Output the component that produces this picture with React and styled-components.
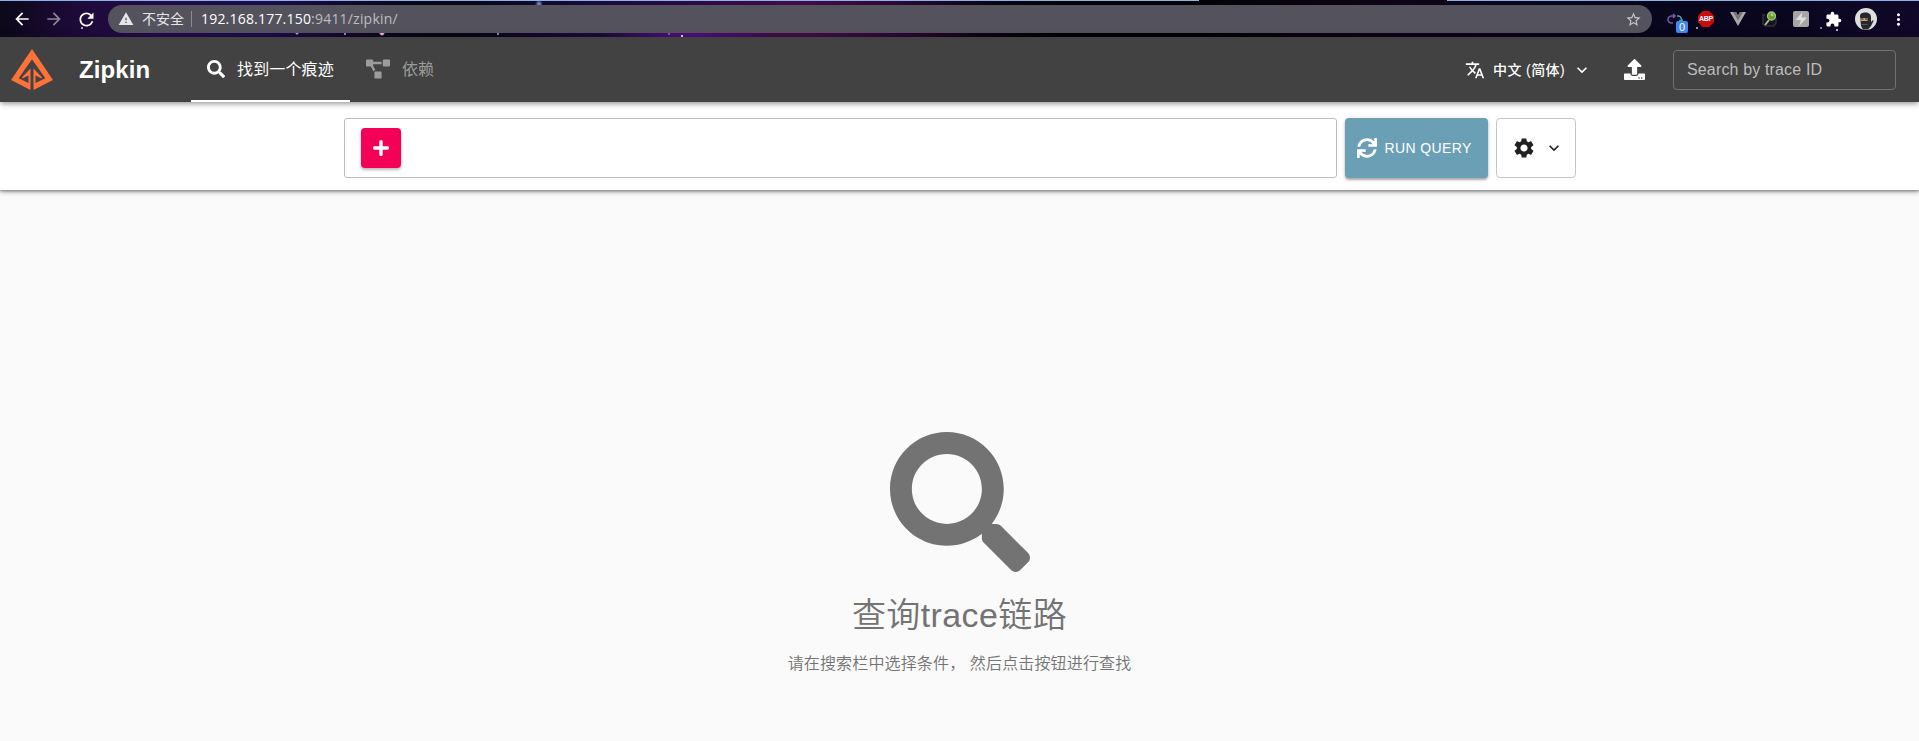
import React from "react";
import styled, { createGlobalStyle } from "styled-components";
import { FaSearch, FaProjectDiagram, FaUpload, FaSync, FaPlus } from "react-icons/fa";
import {
  MdTranslate, MdExpandMore, MdSettings, MdArrowBack, MdArrowForward,
  MdRefresh, MdWarning, MdStarBorder, MdExtension, MdMoreVert,
} from "react-icons/md";

const sans = `"Liberation Sans", "Noto Sans CJK SC", sans-serif`;

const GlobalStyle = createGlobalStyle`
  *, *::before, *::after { box-sizing: border-box; }
  body { margin: 0; background: #fafafa; font-family: ${sans}; overflow: hidden; }
  button, input { font: inherit; }
  button { padding: 0; border: 0; background: none; color: inherit; }
  svg { display: block; flex: none; }
`;

const Page = styled.div`
  display: flex;
  flex-direction: column;
  height: 741px;
`;

/* Browser toolbar */
const BrowserBar = styled.div`
  flex: none;
  height: 37px;
  display: flex;
  align-items: center;
  padding: 1px 0 0;
  color: #fff;
  background:
    linear-gradient(90deg, #8ab4e8 0 1199px, transparent 1199px 1447px, #8ab4e8 1447px) 0 0 / 100% 1px no-repeat,
    radial-gradient(circle at 297px 33px, #b9a3d0 0 1px, transparent 2px),
    radial-gradient(circle at 345px 34px, #8c84b0 0 1px, transparent 1.5px),
    radial-gradient(circle at 382px 33px, #f0b6d6 0 1.5px, transparent 3px),
    radial-gradient(circle at 82px 28px, #b7a0cb 0 .7px, transparent 1.5px),
    radial-gradient(circle at 539px 4px, #6688b4 0 1px, transparent 4px),
    radial-gradient(circle at 498px 34px, #8d84a0 0 1px, transparent 1.5px),
    radial-gradient(circle at 669px 34px, #7d5aa8 0 1px, transparent 1.5px),
    radial-gradient(circle at 682px 36px, #e2c8f4 0 1px, transparent 1.5px),
    radial-gradient(circle at 1697px 28px, #8f8ba0 0 .7px, transparent 1.5px),
    radial-gradient(circle at 1821px 28px, #5d93a5 0 .7px, transparent 1.5px),
    radial-gradient(circle at 1837px 30px, #c2a1d8 0 .7px, transparent 1.5px),
    radial-gradient(ellipse 90px 20px at 690px 36px, rgba(84, 16, 134, .9), transparent),
    linear-gradient(90deg, #0b0819 0, #1d0a38 75px, #240b4a 160px, #1c0c4a 270px, #0c0718 400px,
      #0a0616 470px, #170a38 580px, #2c0a42 690px, #450b48 800px, #2c0834 900px, #0c0512 985px, #030305 1060px,
      #030305 1200px, #0f0418 1400px, #08061a 1650px, #0b0620 1800px, #110729 1919px);
`;

const NavIcons = styled.div`
  flex: none;
  display: flex;
  align-items: center;
  gap: 12px;
  width: 108px;
  padding-left: 12px;
`;

const Dimmed = styled.span`
  opacity: .5;
`;

const AddressBar = styled.div`
  flex: none;
  display: flex;
  align-items: center;
  width: 1544px;
  height: 28px;
  padding: 0 10px 0 10px;
  border-radius: 14px;
  background: #54535d;
  font: 14px/28px "Open Sans", "Noto Sans CJK SC", sans-serif;
`;

const Security = styled.span`
  margin-left: 8px;
  color: #e6e6e9;
`;

const Divider = styled.span`
  width: 1px;
  height: 16px;
  margin: 0 9px 0 7px;
  background: #8b8a92;
`;

const Url = styled.span`
  flex: 1;
  color: #bdbdc2;
  letter-spacing: .2px;
`;

const Host = styled.span`
  color: #fff;
`;

const Extensions = styled.div`
  flex: none;
  display: flex;
  align-items: center;
  padding-left: 15px;
`;

const Slot = styled.span`
  flex: none;
  position: relative;
  display: flex;
  justify-content: center;
  width: ${(p) => p.$w || 32}px;
`;

const CountBadge = styled.span`
  position: absolute;
  left: 9px;
  top: 10px;
  width: 12px;
  height: 12px;
  border-radius: 2px;
  background: #4285f4;
  font: 11px/12px "Liberation Sans", sans-serif;
  text-align: center;
`;

const AdBlock = styled.span`
  width: 16px;
  height: 16px;
  background: #c70d0d;
  clip-path: polygon(30% 0, 70% 0, 100% 30%, 100% 70%, 70% 100%, 30% 100%, 0 70%, 0 30%);
  font: bold 7px/16px "Liberation Sans", sans-serif;
  letter-spacing: -.2px;
  text-align: center;
`;

/* Application header */
const Header = styled.header`
  position: relative;
  z-index: 2;
  flex: none;
  display: flex;
  align-items: center;
  height: 65px;
  padding: 0 23px 0 11px;
  background: #424242;
  color: #fff;
  box-shadow: 0 3px 4px -1px rgba(0, 0, 0, .25), 0 1px 8px rgba(0, 0, 0, .2);
`;

const Brand = styled.h1`
  width: 112px;
  margin: 0 0 0 26px;
  font-size: 24px;
  line-height: 32px;
  font-weight: 700;
  letter-spacing: .1px;
`;

const Tab = styled.a`
  display: flex;
  align-items: center;
  gap: 12px;
  height: 65px;
  padding: 0 16px 3px;
  font-size: 16px;
  letter-spacing: .15px;
  color: ${(p) => (p.$active ? "#fff" : "#9c9c9c")};
  border-bottom: 2px solid ${(p) => (p.$active ? "#fff" : "transparent")};
  border-top: 2px solid transparent;

  svg { margin-top: 2px; }
`;

const Spacer = styled.div`
  flex: 1;
`;

const Language = styled.button`
  display: flex;
  align-items: center;
  font-size: 14px;
  font-weight: 500;
  letter-spacing: .4px;
`;

const LanguageName = styled.span`
  margin: 0 7px 0 8px;
  padding-bottom: 1px;
`;

const Upload = styled.button`
  margin: 0 28px 0 32px;
`;

const TraceInput = styled.input`
  width: 223px;
  height: 40px;
  padding: 0 13px;
  border: 1px solid #717171;
  border-radius: 4px;
  background: transparent;
  font-size: 16px;
  letter-spacing: .15px;
  color: #fff;
  &::placeholder { color: #bcbcbc; opacity: 1; }
`;

/* Query panel */
const QueryPanel = styled.section`
  position: relative;
  z-index: 1;
  flex: none;
  display: flex;
  justify-content: center;
  gap: 8px;
  height: 88px;
  padding: 16px 0 0;
  background: #fff;
  box-shadow: 0 1px 3px rgba(0, 0, 0, .4), 0 2px 5px rgba(0, 0, 0, .25);
`;

const Criteria = styled.div`
  display: flex;
  align-items: center;
  width: 993px;
  height: 60px;
  padding: 0 16px;
  border: 1px solid #bdbdbd;
  border-radius: 3px;
`;

const AddButton = styled.button`
  display: flex;
  align-items: center;
  justify-content: center;
  width: 40px;
  height: 40px;
  border-radius: 4px;
  background: #f50057;
  color: #fff;
  box-shadow: 0 2px 3px rgba(0, 0, 0, .28);
`;

const RunButton = styled.button`
  display: flex;
  align-items: center;
  width: 143px;
  height: 60px;
  padding-left: 12px;
  gap: 8px;
  border-radius: 4px;
  background: #6b9fb6;
  color: #fff;
  font-size: 14px;
  letter-spacing: .4px;
  box-shadow: 0 2px 2px rgba(0, 0, 0, .25), 0 1px 4px rgba(0, 0, 0, .16);
`;

const SettingsButton = styled.button`
  display: flex;
  align-items: center;
  width: 80px;
  height: 60px;
  padding-left: 15px;
  gap: 8px;
  border: 1px solid #c4c4c4;
  border-radius: 4px;
  color: #212121;
`;

/* Empty state */
const EmptyState = styled.main`
  flex: 1;
  display: flex;
  flex-direction: column;
  align-items: center;
  padding-top: 242px;
  color: #737373;
`;

const Title = styled.h2`
  margin: 22px 0 0;
  font-size: 34px;
  line-height: 42px;
  font-weight: 350;
  letter-spacing: .4px;
`;

const Hint = styled.p`
  margin: 16px 0 0;
  font-size: 16px;
  line-height: 24px;
  font-weight: 350;
  letter-spacing: .15px;
`;

const Logo = () => (
  <svg width="42" height="41" viewBox="0 0 42 41">
    <path fill="#fe7139" d="M21 0 42 31 22.500 41V19.500l8.200 8.500v1.500l-6.200-3v7.400l9.800-4.600L21 10.300 7.700 29.300l9.800 4.600v-7.400l-6.200 3v-1.500l8.200-8.500V41L0 31Z" />
  </svg>
);

const LoopIcon = () => (
  <svg width="16" height="16" viewBox="0 0 16 16" fill="none" strokeWidth="1.6">
    <path stroke="#7558b5" d="M6 12H4.500a3.500 3.500 0 0 1 0-7H8M6 3l2 2-2 2" />
    <path stroke="#35a9c4" d="M10 5h1a3.500 3.500 0 0 1 3.500 3.500V11M12.500 9l2 2 1.500-2" />
  </svg>
);

const VueIcon = () => (
  <svg width="16" height="14" viewBox="0 0 16 14">
    <path fill="#a9a9a9" d="M0 0h6l2 3.500L10 0h6L8 14Z" />
    <path fill="#737373" d="M3 0h3l2 3.500L10 0h3L8 8.500Z" />
  </svg>
);

const InspectIcon = () => (
  <svg width="15" height="17" viewBox="0 0 15 17">
    <path d="M3 4H1v9l2 2h9l2-3V7" fill="#151515" stroke="#303030" strokeWidth="1.500" />
    <path d="m7 9-4 5" stroke="#b7b99b" strokeWidth="2" />
    <circle cx="9.500" cy="5" r="4" fill="#65a51f" stroke="#a9bea1" strokeWidth="1.300" />
    <circle cx="10" cy="3.700" r="1.500" fill="#a7d866" />
  </svg>
);

const BoltIcon = () => (
  <svg width="16" height="16" viewBox="0 0 16 16">
    <rect width="16" height="16" rx="2" fill="#a6a6a6" />
    <path fill="#dedede" d="M9.500 1 2.500 9H8l-2 6 8-8.500H8.500Z" />
  </svg>
);

const Avatar = () => (
  <svg width="22" height="22" viewBox="0 0 22 22">
    <circle cx="11" cy="11" r="11" fill="#dedede" />
    <path fill="#25282c" d="M5 8c0-2.500 2.500-3.500 5.500-3.500S16 6 16 9v5l2-2 .5 1-2.500 5-3 3.500H8L6 18Z" />
    <path fill="#d2a078" d="M5.500 10h7v3h-7Z" />
    <path fill="#25282c" d="M6 10.500h2.500v1H6Zm4 0h2v1h-2Z" />
    <path fill="#505860" d="M6.500 16h6v1h-6Z" />
  </svg>
);

export default function App() {
  return (
    <Page>
      <GlobalStyle />
      <BrowserBar>
        <NavIcons>
          <MdArrowBack size={20} />
          <Dimmed><MdArrowForward size={20} /></Dimmed>
          <MdRefresh size={21} />
        </NavIcons>
        <AddressBar>
          <MdWarning size={16} color="#e6e6e9" />
          <Security>不安全</Security>
          <Divider />
          <Url><Host>192.168.177.150</Host>:9411/zipkin/</Url>
          <MdStarBorder size={17} color="#c6c6ca" />
        </AddressBar>
        <Extensions>
          <Slot $w={15}><LoopIcon /><CountBadge>0</CountBadge></Slot>
          <Slot $w={48}><AdBlock>ABP</AdBlock></Slot>
          <Slot $w={16}><VueIcon /></Slot>
          <Slot $w={47}><InspectIcon /></Slot>
          <Slot $w={16}><BoltIcon /></Slot>
          <Slot $w={48}><MdExtension size={17} /></Slot>
          <Slot $w={18}><Avatar /></Slot>
          <Slot $w={46}><MdMoreVert size={19} /></Slot>
        </Extensions>
      </BrowserBar>
      <Header>
        <Logo />
        <Brand>Zipkin</Brand>
        <Tab $active><FaSearch size={18} />找到一个痕迹</Tab>
        <Tab><FaProjectDiagram size={24} />依赖</Tab>
        <Spacer />
        <Language>
          <MdTranslate size={20} />
          <LanguageName>中文 (简体)</LanguageName>
          <MdExpandMore size={20} />
        </Language>
        <Upload aria-label="Upload"><FaUpload size={21} /></Upload>
        <TraceInput placeholder="Search by trace ID" />
      </Header>
      <QueryPanel>
        <Criteria>
          <AddButton aria-label="Add"><FaPlus size={18} /></AddButton>
        </Criteria>
        <RunButton><FaSync size={20} />RUN QUERY</RunButton>
        <SettingsButton aria-label="Settings">
          <MdSettings size={24} />
          <MdExpandMore size={20} />
        </SettingsButton>
      </QueryPanel>
      <EmptyState>
        <FaSearch size={140} />
        <Title>查询trace链路</Title>
        <Hint>{"请在搜索栏中选择条件\uFF0C 然后点击按钮进行查找"}</Hint>
      </EmptyState>
    </Page>
  );
}
